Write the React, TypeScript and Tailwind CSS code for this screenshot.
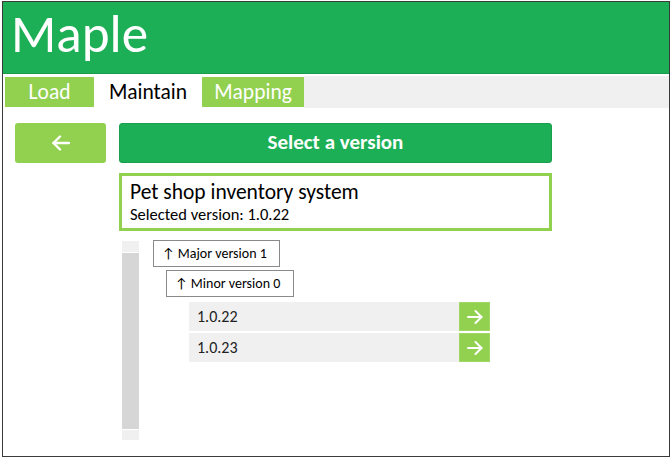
import React from "react";

const font = "[font-family:Carlito,Calibri,Lato,'Liberation_Sans',sans-serif]";

function LeftArrow() {
  return (
    <svg width="18" height="16" viewBox="0 0 18 16" fill="none" stroke="white" strokeWidth="2.4" strokeLinecap="round" strokeLinejoin="round">
      <path d="M17 8H1.5" />
      <path d="M8 1.5L1.5 8L8 14.5" />
    </svg>
  );
}

function RightArrow() {
  return (
    <svg width="16" height="14" viewBox="0 0 16 14" fill="none" stroke="white" strokeWidth="2" strokeLinecap="round" strokeLinejoin="round">
      <path d="M1 7H14.5" />
      <path d="M8.5 1L14.5 7L8.5 13" />
    </svg>
  );
}

function VersionRow({ v }: { v: string }) {
  return (
    <div className="flex h-[29px]">
      <div className="w-[270px] bg-[#f0f0f0] flex items-center pl-[8px] text-[16px] text-[#222]">{v}</div>
      <button className="w-[31px] bg-[#92d050] border border-[#9fd866] flex items-center justify-center">
        <RightArrow />
      </button>
    </div>
  );
}

export default function App() {
  return (
    <div className={`${font} ml-[2px] mt-[1px] w-[668px] h-[456px] border border-[#3a3a3a] bg-white overflow-hidden`}>
      <div className="h-[72px] bg-[#1daf56] border-b border-[#1a9a4b] flex items-center pl-[8px]">
        <span className="text-white text-[53px] leading-none mt-[-6px]">Maple</span>
      </div>
      <div className="mt-[2px] h-[32px] flex items-stretch">
        <div className="ml-[2px] w-[89px] h-[30px] mt-[1px] bg-[#92d050] text-white text-[21.5px] flex items-center justify-center">Load</div>
        <div className="ml-[1px] w-[106px] h-[30px] mt-[1px] bg-white text-black text-[21.5px] flex items-center justify-center">Maintain</div>
        <div className="ml-[1px] w-[102px] h-[30px] mt-[1px] bg-[#92d050] text-white text-[21.5px] flex items-center justify-center">Mapping</div>
        <div className="flex-1 bg-[#f0f0f0]" />
      </div>
      <div className="flex mt-[15px] ml-[12px]">
        <button className="w-[91px] h-[40px] rounded-[3px] bg-[#92d050] flex items-center justify-center">
          <LeftArrow />
        </button>
        <div className="ml-[13px] w-[433px] flex flex-col">
          <button className="h-[40px] rounded-[3px] bg-[#1daf56] border border-[#1a9f4e] text-white text-[21px] font-semibold flex items-center justify-center">
            Select a version
          </button>
          <div className="mt-[10px] h-[58px] border-[3px] border-[#92d050] pl-[8px] flex flex-col justify-center">
            <div className="text-[21.5px] leading-[25px] text-black">Pet shop inventory system</div>
            <div className="text-[16.5px] leading-[19px] text-black">Selected version: 1.0.22</div>
          </div>
          <div className="mt-[9px] ml-[3px] flex">
            <div className="w-[17px] mt-[1px] flex flex-col">
              <div className="h-[11px] bg-[#f0f0f0]" />
              <div className="h-[176px] mt-[1px] bg-[#d6d6d6]" />
              <div className="h-[10px] mt-[1px] bg-[#f0f0f0]" />
            </div>
            <div className="ml-[14px] flex flex-col">
              <div className="w-[127px] h-[27px] border border-[#8a8a8a] flex items-center pl-[8px] text-[14px] text-black">↑ Major version 1</div>
              <div className="ml-[13px] mt-[3px] w-[128px] h-[27px] border border-[#8a8a8a] flex items-center pl-[8px] text-[14px] text-black">↑ Minor version 0</div>
              <div className="ml-[36px] mt-[5px] flex flex-col gap-[2px]">
                <VersionRow v="1.0.22" />
                <VersionRow v="1.0.23" />
              </div>
            </div>
          </div>
        </div>
      </div>
    </div>
  );
}
